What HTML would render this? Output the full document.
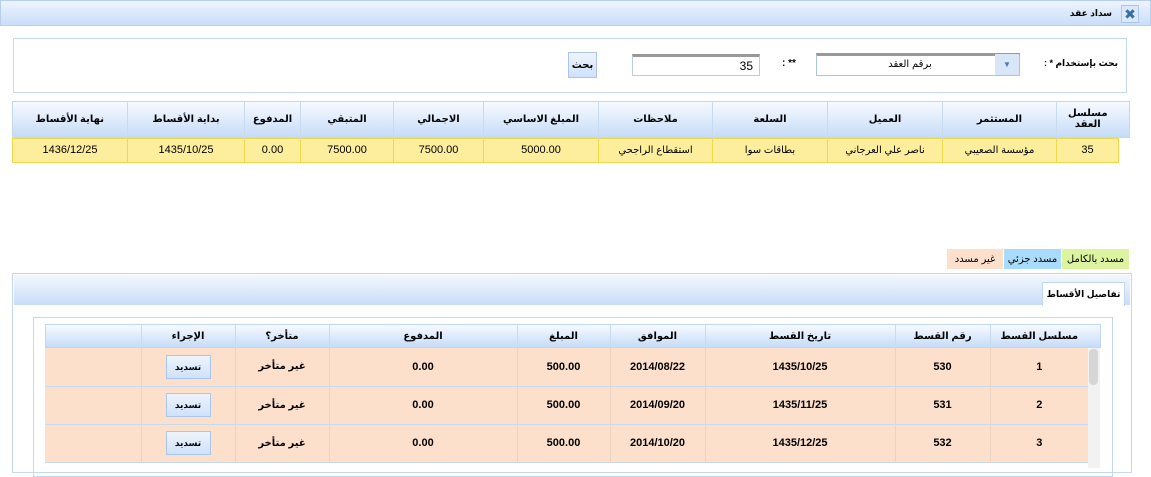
<!DOCTYPE html>
<html><head><meta charset="utf-8"><style>
*{box-sizing:border-box;margin:0;padding:0;white-space:nowrap}
body{width:1151px;height:464px;overflow:hidden;background:#fff;font-family:"Liberation Sans","DejaVu Sans",sans-serif;font-size:11px;color:#000;position:relative}
.a{position:absolute}
.c{display:flex;align-items:center;justify-content:center;text-align:center}
.hg{background:linear-gradient(#eef4fc,#c9defa)}
table{border-collapse:collapse;position:absolute;table-layout:fixed}
td{text-align:center;font-size:11px;overflow:hidden}
td.w{white-space:normal}
</style></head><body>
<div class="a hg" style="left:0;top:0;width:1151px;height:26px;border:1px solid #b8d0ee"></div>
<div class="a c" style="left:1121px;top:5px;width:18px;height:18px;border:1px solid #aac6ec;background:#dbe8f8;color:#3a6ea8;font-weight:bold;font-size:14px">✖</div>
<div class="a" style="left:1060px;top:8px;font-size:9px;font-weight:bold;direction:rtl;width:52px;text-align:right">سداد عقد</div>

<div class="a" style="left:13px;top:38px;width:1114px;height:55px;border:1px solid #c3d7f0"></div>
<div class="a" style="left:1020px;top:58px;width:98px;font-size:9px;font-weight:bold;direction:rtl;text-align:right">بحث بإستخدام * :</div>
<div class="a" style="left:816px;top:53px;width:204px;height:23px;border:1px solid #a9c4e8;border-top:3px solid #999;background:#fff"></div>
<div class="a c" style="left:995px;top:54px;width:24px;height:21px;background:#d8e6f8;color:#4a7bb5;font-size:8px">▼</div>
<div class="a" style="left:830px;top:59px;width:160px;text-align:center;font-size:10px">برقم العقد</div>
<div class="a" style="left:782px;top:58px;font-size:10px;font-weight:bold">: **</div>
<div class="a" style="left:632px;top:54px;width:128px;height:22px;border:1px solid #b9cde8;border-top:3px solid #999;text-align:right;padding-right:6px;font-size:12px;line-height:18px">35</div>
<div class="a c" style="left:568px;top:52px;width:29px;height:26px;border:1px solid #aac6ec;background:linear-gradient(#eef4fc,#cfe2fb);font-weight:bold;font-size:10px">بحث</div>

<div class="a hg" style="left:12px;top:101px;width:1118px;height:37px;border:1px solid #c3d7f0;background:linear-gradient(#f7fafe,#c6dcf9)"></div>
<table style="left:12px;top:101px;width:1106px;direction:rtl">
<colgroup><col style="width:62px"><col style="width:114px"><col style="width:115px"><col style="width:115px"><col style="width:114px"><col style="width:115px"><col style="width:90px"><col style="width:93px"><col style="width:56px"><col style="width:117px"><col style="width:115px"></colgroup>
<tr style="height:37px;font-weight:bold">
<td class="w" style="border-left:1px solid #c8daf0;font-weight:bold;font-size:10px">مسلسل<br>العقد</td><td style="border-left:1px solid #c8daf0;font-weight:bold;font-size:10px">المستثمر</td><td style="border-left:1px solid #c8daf0;font-weight:bold;font-size:10px">العميل</td><td style="border-left:1px solid #c8daf0;font-weight:bold;font-size:10px">السلعة</td><td style="border-left:1px solid #c8daf0;font-weight:bold;font-size:10px">ملاحظات</td><td style="border-left:1px solid #c8daf0;font-weight:bold;font-size:10px">المبلغ الاساسي</td><td style="border-left:1px solid #c8daf0;font-weight:bold;font-size:10px">الاجمالي</td><td style="border-left:1px solid #c8daf0;font-weight:bold;font-size:10px">المتبقي</td><td style="border-left:1px solid #c8daf0;font-weight:bold;font-size:10px">المدفوع</td><td style="border-left:1px solid #c8daf0;font-weight:bold;font-size:10px">بداية الأقساط</td><td style="font-weight:bold;font-size:10px">نهاية الأقساط</td></tr>
<tr style="height:24px;background:#fdee9e;border:1px solid #f1d84a">
<td style="border:1px solid #f1d84a">35</td><td style="border:1px solid #f1d84a;font-size:10px">مؤسسة الصعيبي</td><td style="border:1px solid #f1d84a;font-size:10px">ناصر علي العرجاني</td><td style="border:1px solid #f1d84a;font-size:10px">بطاقات سوا</td><td style="border:1px solid #f1d84a;font-size:10px">استقطاع الراجحي</td><td style="border:1px solid #f1d84a">5000.00</td><td style="border:1px solid #f1d84a">7500.00</td><td style="border:1px solid #f1d84a">7500.00</td><td style="border:1px solid #f1d84a">0.00</td><td style="border:1px solid #f1d84a">1435/10/25</td><td style="border:1px solid #f1d84a">1436/12/25</td></tr>
</table>

<div class="a c" style="left:1062px;top:249px;width:67px;height:20px;background:#dcf3a0;font-size:10px">مسدد بالكامل</div>
<div class="a c" style="left:1004px;top:249px;width:57px;height:20px;background:#a8dbfc;font-size:10px">مسدد جزئي</div>
<div class="a c" style="left:947px;top:249px;width:56px;height:20px;background:#fde0cc;font-size:10px">غير مسدد</div>

<div class="a" style="left:12px;top:273px;width:1120px;height:200px;border:1px solid #c3d7f0"></div>
<div class="a hg" style="left:14px;top:275px;width:1116px;height:30px;background:linear-gradient(#f3f7fd,#c9ddf8)"></div>
<div class="a c" style="left:1042px;top:282px;width:83px;height:24px;background:#fff;border:1px solid #c3d7f0;border-bottom:none;font-weight:bold;font-size:9px">تفاصيل الأقساط</div>
<div class="a" style="left:33px;top:317px;width:1080px;height:160px;border:1px solid #c3d7f0"></div>
<div class="a" style="left:45px;top:324px;width:1056px;height:24px;background:linear-gradient(#f7fafe,#c6dcf9);border:1px solid #c3d7f0"></div>
<div class="a" style="left:1088px;top:348px;width:12px;height:120px;background:#f2f2f2"></div>
<div class="a" style="left:1089px;top:349px;width:9px;height:36px;background:#d6d6d6;border-radius:4px"></div>
<table style="left:45px;top:324px;width:1043px;direction:rtl">
<colgroup><col style="width:98px"><col style="width:95px"><col style="width:190px"><col style="width:95px"><col style="width:93px"><col style="width:188px"><col style="width:94px"><col style="width:94px"><col style="width:96px"></colgroup>
<tr style="height:24px"><td style="font-weight:bold;font-size:10px;border-left:1px solid #c8daf0">مسلسل القسط</td><td style="font-weight:bold;font-size:10px;border-left:1px solid #c8daf0">رقم القسط</td><td style="font-weight:bold;font-size:10px;border-left:1px solid #c8daf0">تاريخ القسط</td><td style="font-weight:bold;font-size:10px;border-left:1px solid #c8daf0">الموافق</td><td style="font-weight:bold;font-size:10px;border-left:1px solid #c8daf0">المبلغ</td><td style="font-weight:bold;font-size:10px;border-left:1px solid #c8daf0">المدفوع</td><td style="font-weight:bold;font-size:10px;border-left:1px solid #c8daf0">متأخر؟</td><td style="font-weight:bold;font-size:10px;border-left:1px solid #c8daf0">الإجراء</td><td></td></tr>
<tr style="height:38px;background:#fde0cc;font-weight:bold;border-bottom:1px solid #c8daf0"><td style="border-left:1px solid #ecd2c0">1</td><td style="border-left:1px solid #ecd2c0">530</td><td style="border-left:1px solid #ecd2c0">1435/10/25</td><td style="border-left:1px solid #ecd2c0">2014/08/22</td><td style="border-left:1px solid #ecd2c0">500.00</td><td style="border-left:1px solid #ecd2c0">0.00</td><td style="border-left:1px solid #ecd2c0;font-size:10px">غير متأخر</td><td style="border-left:1px solid #ecd2c0"><div style="margin:auto;width:45px;height:24px;border:1px solid #aac6ec;background:linear-gradient(#eef4fc,#cfe2fb);font-size:9px;line-height:22px">تسديد</div></td><td></td></tr>
<tr style="height:38px;background:#fde0cc;font-weight:bold;border-bottom:1px solid #c8daf0"><td style="border-left:1px solid #ecd2c0">2</td><td style="border-left:1px solid #ecd2c0">531</td><td style="border-left:1px solid #ecd2c0">1435/11/25</td><td style="border-left:1px solid #ecd2c0">2014/09/20</td><td style="border-left:1px solid #ecd2c0">500.00</td><td style="border-left:1px solid #ecd2c0">0.00</td><td style="border-left:1px solid #ecd2c0;font-size:10px">غير متأخر</td><td style="border-left:1px solid #ecd2c0"><div style="margin:auto;width:45px;height:24px;border:1px solid #aac6ec;background:linear-gradient(#eef4fc,#cfe2fb);font-size:9px;line-height:22px">تسديد</div></td><td></td></tr>
<tr style="height:38px;background:#fde0cc;font-weight:bold;border-bottom:1px solid #c8daf0"><td style="border-left:1px solid #ecd2c0">3</td><td style="border-left:1px solid #ecd2c0">532</td><td style="border-left:1px solid #ecd2c0">1435/12/25</td><td style="border-left:1px solid #ecd2c0">2014/10/20</td><td style="border-left:1px solid #ecd2c0">500.00</td><td style="border-left:1px solid #ecd2c0">0.00</td><td style="border-left:1px solid #ecd2c0;font-size:10px">غير متأخر</td><td style="border-left:1px solid #ecd2c0"><div style="margin:auto;width:45px;height:24px;border:1px solid #aac6ec;background:linear-gradient(#eef4fc,#cfe2fb);font-size:9px;line-height:22px">تسديد</div></td><td></td></tr>
</table>
</body></html>
